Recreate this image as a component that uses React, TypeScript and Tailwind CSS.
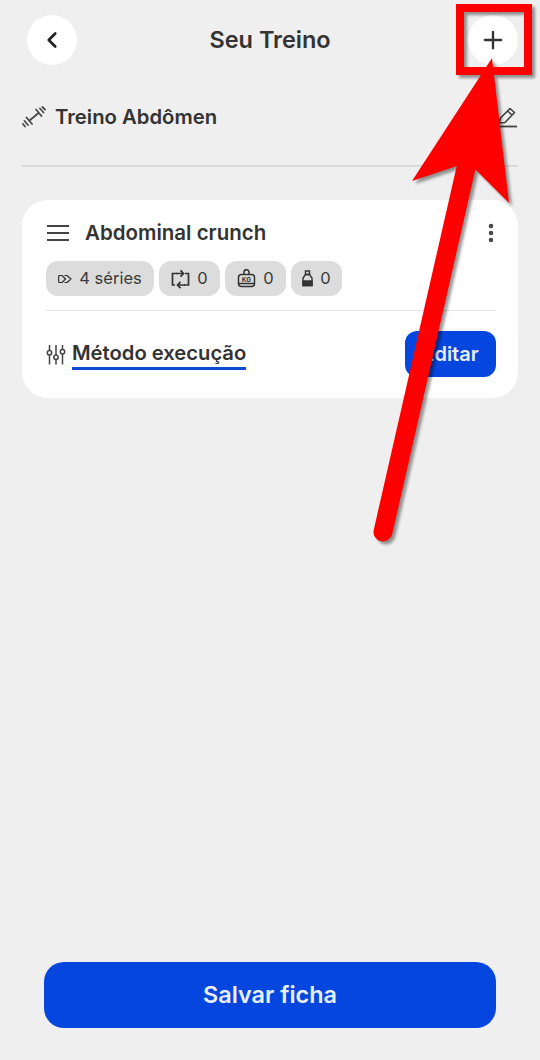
import type { ReactNode } from 'react';
import { ChevronLeft, Plus, MoreVertical } from 'lucide-react';

const font = 'font-["Inter","Noto_Sans",sans-serif]';

function Chip({ icon, label, width }: { icon: ReactNode; label: string; width: string }) {
  return (
    <div className={`${width} h-[35px] rounded-xl bg-[#dcdcdc] flex items-center justify-center gap-[7px] text-[16.500px] text-[#3a3a3a]`}>
      {icon}
      <span>{label}</span>
    </div>
  );
}

function SeriesIcon() {
  return (
    <svg width="14" height="12" viewBox="0 0 14 12" fill="none" stroke="#333" strokeWidth="1.200" strokeLinejoin="round">
      <path d="M1 2.500h3L7.500 6 4 9.500H1C.5 7.500.5 4.500 1 2.500z" />
      <path d="M6.500 2.500h2.500L13 6l-4 3.500H6.500" />
    </svg>
  );
}

function RepeatIcon() {
  return (
    <svg width="19" height="20" viewBox="0 0 19 20" fill="none" stroke="#333" strokeWidth="1.700">
      <path d="M6 4.500H1.500v11.500H4" />
      <path d="M5 4.500h7M9.500 1.300l3 3.200-3 3.200" />
      <path d="M14 4.500h3.500V16H13" />
      <path d="M14 16H7M9.500 12.800l-3 3.200 3 3.200" />
    </svg>
  );
}

function WeightIcon() {
  return (
    <svg width="19" height="19" viewBox="0 0 19 19" fill="none" stroke="#333" strokeWidth="1.500">
      <path d="M7 5.500V3.200a2.500 2.500 0 0 1 5 0v2.300" />
      <rect x="1.500" y="5.500" width="16" height="12" rx="3" />
      <path d="M1.500 14.500h16" />
      <text x="9.500" y="12.800" fontSize="6.500" fontWeight="700" fill="#333" stroke="none" textAnchor="middle">KG</text>
    </svg>
  );
}

function BottleIcon() {
  return (
    <svg width="11" height="17" viewBox="0 0 11 17" fill="none" stroke="#333" strokeWidth="1.400">
      <path d="M3.500 1h4v3.500h-4z" />
      <path d="M3.500 4.500h4L10 8v7.500H1V8z" />
      <path d="M1 11h9v4.500H1z" fill="#333" />
    </svg>
  );
}

function DumbbellIcon() {
  return (
    <svg width="24" height="22" viewBox="0 0 24 22" fill="none" stroke="#4a4a4a" strokeWidth="1.800" strokeLinecap="round">
      <path d="M7.500 14.500L16.500 7" />
      <path d="M4.500 11.500l5.500 6.500M14 3.500l5.500 6.500" />
      <path d="M2.500 15l3.500 4M1 18l2 2.500M18 2.500l3.500 4M20.500 1l2.500 2.500" />
    </svg>
  );
}

function PencilIcon() {
  return (
    <svg width="22" height="22" viewBox="0 0 22 22" fill="none" stroke="#444" strokeWidth="1.600" strokeLinejoin="round">
      <path d="M3 17l1.500-5L14 2.500l4.500 4L9 16.500z" />
      <path d="M11.500 5l4.500 4" />
      <path d="M1 20.500h20" strokeWidth="1.800" />
    </svg>
  );
}

function HamburgerIcon() {
  return (
    <svg width="24" height="18" viewBox="0 0 24 18" fill="none" stroke="#444" strokeWidth="2">
      <path d="M1 2h22M1 9h22M1 16h22" />
    </svg>
  );
}

function SlidersIcon() {
  return (
    <svg width="20" height="21" viewBox="0 0 20 21" fill="none" stroke="#444" strokeWidth="1.500">
      <path d="M3.500 1v5.500M3.500 11v9.500M10 1v10M10 15.500v5M16.500 1v4.500M16.500 10v10.500" />
      <circle cx="3.500" cy="8.800" r="2.200" />
      <circle cx="10" cy="13.300" r="2.200" />
      <circle cx="16.500" cy="7.800" r="2.200" />
    </svg>
  );
}

function Annotation() {
  return (
    <svg className="absolute left-0 top-0 pointer-events-none" width="540" height="1060" viewBox="0 0 540 1060">
      <g transform="translate(3 3)" opacity="0.4" filter="blur(1.500px)">
        <rect x="460" y="8" width="68" height="63" fill="none" stroke="#000" strokeWidth="8" />
        <path d="M466 168L383 532" stroke="#000" strokeWidth="19" strokeLinecap="round" />
        <path d="M492 58L412 181L457 166L476 170L509 203Z" fill="#000" />
      </g>
      <rect x="460" y="8" width="68" height="63" fill="none" stroke="#ff0000" strokeWidth="8" />
      <path d="M466 168L383 532" stroke="#ff0000" strokeWidth="19" strokeLinecap="round" />
      <path d="M492 58L412 181L457 166L476 170L509 203Z" fill="#ff0000" />
    </svg>
  );
}

export default function App() {
  return (
    <div className={`${font} relative w-[540px] h-[1060px] overflow-hidden bg-[#efefef] flex flex-col text-[#333]`}>
      <header className="grid grid-cols-[1fr_auto_1fr] items-center pl-[27px] pr-[22px] pt-[15px]">
        <button className="w-[50px] h-[50px] rounded-full bg-white flex items-center justify-center">
          <ChevronLeft size={26} strokeWidth={2.500} color="#222" />
        </button>
        <h1 className="text-[23.500px] font-semibold -ml-[5px]">Seu Treino</h1>
        <button className="justify-self-end w-[50px] h-[50px] rounded-full bg-white flex items-center justify-center">
          <Plus size={28} strokeWidth={2} color="#333" />
        </button>
      </header>

      <div className="mx-[22px] mt-[32px] h-[40px] flex items-center justify-between">
        <div className="flex items-center gap-[9px]">
          <DumbbellIcon />
          <span className="text-[20.300px] font-semibold">Treino Abdômen</span>
        </div>
        <PencilIcon />
      </div>

      <div className="mx-[22px] mt-[28px] h-[2px] bg-[#d9d9d9]" />

      <section className="mx-[22px] mt-[33px] h-[198px] rounded-[26px] bg-white pl-[24px] pr-[22px] pt-[18px]">
        <div className="h-[30px] flex items-center justify-between">
          <div className="flex items-center gap-[15px]">
            <HamburgerIcon />
            <span className="text-[20.500px] font-semibold">Abdominal crunch</span>
          </div>
          <MoreVertical size={24} strokeWidth={2.500} color="#444" className="-mr-[7px]" />
        </div>

        <div className="flex gap-[5px] mt-[13px]">
          <Chip width="w-[108px]" icon={<SeriesIcon />} label="4 séries" />
          <Chip width="w-[61px]" icon={<RepeatIcon />} label="0" />
          <Chip width="w-[61px]" icon={<WeightIcon />} label="0" />
          <Chip width="w-[51px]" icon={<BottleIcon />} label="0" />
        </div>

        <div className="mt-[14px] h-[1px] bg-[#e5e5e5]" />

        <div className="mt-[20px] flex items-center justify-between">
          <div className="flex items-center gap-[6px]">
            <SlidersIcon />
            <span className="text-[20.200px] font-semibold border-b-[3px] border-[#0b4bd0] pb-[1px] leading-[27px] w-[174px] whitespace-nowrap">Método execução</span>
          </div>
          <button className="w-[91px] h-[46px] rounded-xl bg-[#0546de] text-[#e8eefc] text-[20px] font-semibold">Editar</button>
        </div>
      </section>

      <button className="mx-[44px] mt-auto mb-[32px] h-[66px] rounded-[20px] bg-[#0546de] text-[#e8eefc] text-[23.400px] font-semibold">Salvar ficha</button>

      <Annotation />
    </div>
  );
}
